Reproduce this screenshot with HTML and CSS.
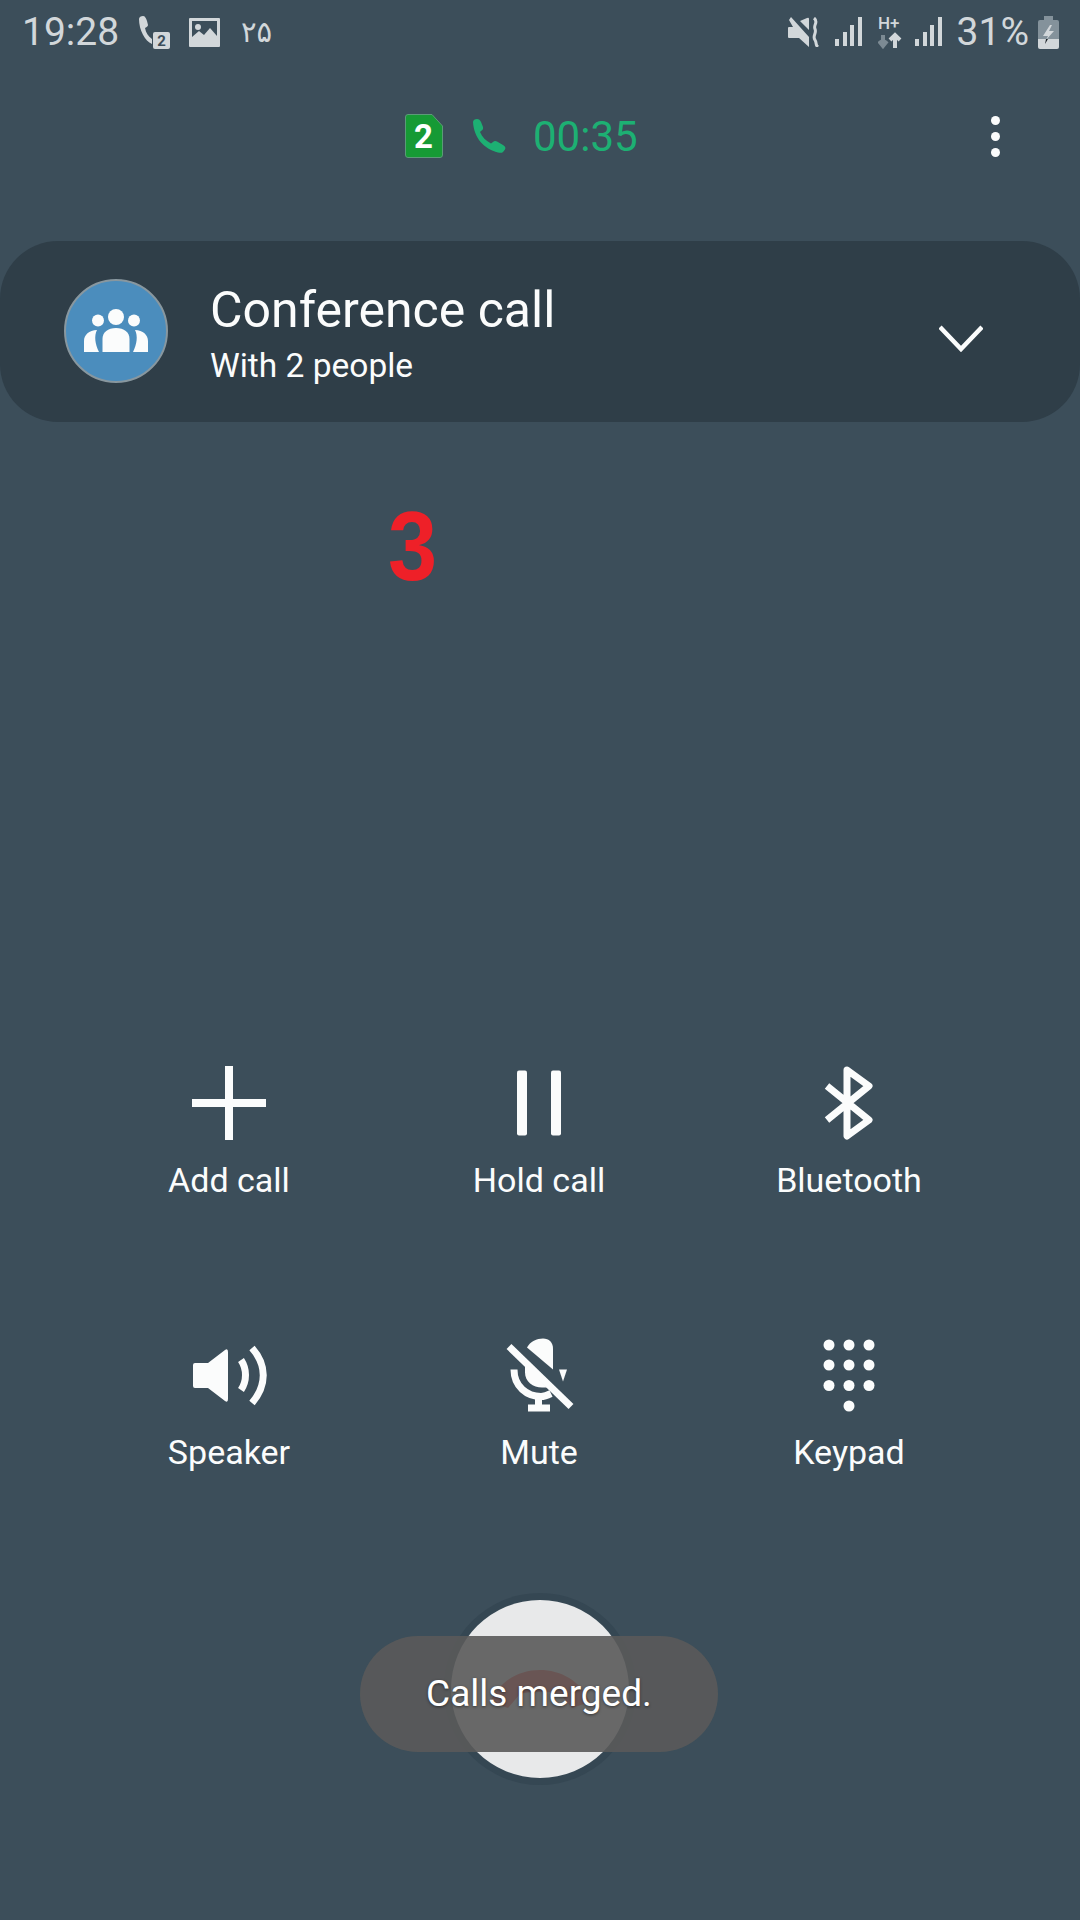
FILE: index.html
```html
<!DOCTYPE html>
<html lang="en">
<head>
    <meta charset="UTF-8">
    <meta name="viewport" content="width=device-width, initial-scale=1.0">
    <title>Conference call</title>
    <link rel="stylesheet" href="styles.css">
</head>
<body>
    <div class="screen">
        <div class="status-bar">
            <div class="status-left">
                <span class="status-time">19:28</span>
                <svg class="status-call" width="32" height="33" viewBox="0 0 32 33">
                    <path class="status-fill" d="M1 3C1 1 3 0 5 0C7 0 8 2 9 5L10 9C10 10 9 11 7 12C8 17 10 20 14 23V28C7 25 1 14 1 3Z"/>
                    <rect class="status-fill" x="15" y="16" width="17" height="17" rx="2"/>
                    <text class="chip-num" x="23.500" y="30">2</text>
                </svg>
                <svg class="status-gallery" width="31" height="29" viewBox="0 0 31 29">
                    <path class="status-fill" fill-rule="evenodd" d="M1 0H30Q31 0 31 1V28Q31 29 30 29H1Q0 29 0 28V1Q0 0 1 0ZM3 3V19L10 13L15 17L21 10L28 18V3Z"/>
                    <circle class="status-fill" cx="9" cy="9" r="3"/>
                </svg>
                <span class="status-date">۲۵</span>
            </div>
            <div class="status-right">
                <svg width="31" height="30" viewBox="0 0 31 30">
                    <path class="status-fill" d="M3 0L21 20V30L11 21H1Q0 21 0 20V11Q0 10 1 10H5L1 3ZM21 2V13L12 4L19 1Q21 0 21 2Z"/>
                    <path class="status-wave" d="M26 1C31 5 25 8 27 12C29 16 24 19 27 23C29 26 27 28 30 30"/>
                </svg>
                <svg class="signal" width="27" height="30" viewBox="0 0 27 30">
                    <rect x="0" y="22" width="4" height="7"/>
                    <rect x="8" y="15" width="4" height="14"/>
                    <rect x="15" y="8" width="4" height="21"/>
                    <rect x="23" y="0" width="4" height="29"/>
                </svg>
                <svg class="status-net" width="25" height="39" viewBox="0 -6 25 39">
                    <text class="net-text" x="0" y="13">H+</text>
                    <path class="net-down" d="M5 19V29M1 25L5 30L9 25"/>
                    <path class="net-up" d="M17 32V20M12 24L17 19L22 24"/>
                </svg>
                <svg class="signal" width="27" height="30" viewBox="0 0 27 30">
                    <rect x="0" y="22" width="4" height="7"/>
                    <rect x="8" y="15" width="4" height="14"/>
                    <rect x="15" y="8" width="4" height="21"/>
                    <rect x="23" y="0" width="4" height="29"/>
                </svg>
                <span class="status-pct">31%</span>
                <svg class="status-batt" width="21" height="33" viewBox="0 0 21 33">
                    <path fill="#84929b" d="M6 0H15V4H19Q21 4 21 6V23H0V6Q0 4 2 4H6Z"/>
                    <path class="status-fill" d="M0 23H21V31Q21 33 19 33H2Q0 33 0 31Z"/>
                    <path class="status-fill" d="M12 9L5 20H10L8 24L16 15H11L14 9Z"/>
                    <path fill="#1c2328" d="M10 23H8L7 28Z"/>
                </svg>
            </div>
        </div>

        <div class="call-head">
            <div class="sim-badge">
                <svg width="38" height="44" viewBox="0 0 38 44">
                    <path fill="#169a35" stroke="#5c9a78" d="M3 .5H27L37.500 12V41Q37.500 43.500 35 43.500H3Q.5 43.500 .5 41V3Q.5 .5 3 .5Z"/>
                    <text class="sim-num" x="18.500" y="34">2</text>
                </svg>
            </div>
            <svg class="call-glyph" width="34" height="34" viewBox="0 0 34 34">
                <path d="M1 3C1 1 3 0 5 0C7 0 8 1 9 3L11 8C11.500 10 10.500 11 9 12L8 13C10 18 14 22 19 24.500L21 23C22 22 23.500 21.500 25 22.500L31 26C33 27 34 29 33 30.500L31 33C30 34 28 34 26 33.500C12 30 2 19 1 3Z"/>
            </svg>
            <span class="call-timer">00:35</span>
            <div class="more-menu">
                <span></span><span></span><span></span>
            </div>
        </div>

        <div class="call-card">
            <div class="avatar">
                <svg width="100" height="100" viewBox="2 2 100 100">
                    <circle cx="52" cy="38" r="8"/>
                    <circle cx="34" cy="41.500" r="6"/>
                    <circle cx="70" cy="41.500" r="6"/>
                    <path d="M38.500 73V60C38.500 53 44 49 52 49C60 49 65.500 53 65.500 60V73Z"/>
                    <path d="M20 73V62C20 56 25 51 33 51C30 57 31 65 35 73Z"/>
                    <path d="M84 73V62C84 56 79 51 71 51C74 57 73 65 69 73Z"/>
                </svg>
            </div>
            <div class="card-text">
                <div class="card-title">Conference call</div>
                <div class="card-sub">With 2 people</div>
            </div>
            <svg class="card-chevron" width="44" height="28" viewBox="0 0 44 28">
                <path d="M1 3L22 25L43 3"/>
            </svg>
        </div>

        <div class="number-area">
            <span class="big-number">3</span>
        </div>

        <div class="actions">
            <div class="action">
                <svg class="action-icon" width="90" height="90" viewBox="0 0 90 90">
                    <path class="icon-line" d="M8 45H82M45 8V82"/>
                </svg>
                <div class="action-label">Add call</div>
            </div>
            <div class="action">
                <svg class="action-icon" width="90" height="90" viewBox="0 0 90 90">
                    <rect class="icon-fill" x="23" y="12.500" width="10" height="65" rx="2"/>
                    <rect class="icon-fill" x="57" y="12.500" width="10" height="65" rx="2"/>
                </svg>
                <div class="action-label">Hold call</div>
            </div>
            <div class="action">
                <svg class="action-icon" width="90" height="90" viewBox="0 0 90 90">
                    <path class="icon-line icon-round" d="M23 28L65 62L43 78V12L65 28L23 62"/>
                </svg>
                <div class="action-label">Bluetooth</div>
            </div>
            <div class="action">
                <svg class="action-icon" width="90" height="90" viewBox="0 0 90 90">
                    <g transform="translate(9 17)">
                        <path class="icon-fill" d="M2 16H15L32 3Q35 1 35 5V52Q35 56 32 54L15 41H2Q0 41 0 39V18Q0 16 2 16Z"/>
                        <path class="icon-arc" d="M48 13C54 22 54 34 48 43"/>
                        <path class="icon-arc" d="M59 1C74 18 74 38 59 56"/>
                    </g>
                </svg>
                <div class="action-label">Speaker</div>
            </div>
            <div class="action">
                <svg class="action-icon" width="90" height="90" viewBox="0 0 90 90">
                    <g transform="translate(11 8.500)">
                        <path class="icon-fill" d="M22 9C25 3 32 0 38 0C44 0 48 4 48 10V31Z"/>
                        <path class="icon-fill" d="M20 26V34C20 43 28 49 37 49H42Z"/>
                        <path class="icon-arc" d="M9 31C9 48 22 58 36 58C39 58 42 57 46 55"/>
                        <path class="icon-fill" d="M54 31H62L58 43Z"/>
                        <rect class="icon-fill" x="30" y="58" width="7" height="9"/>
                        <rect class="icon-fill" x="23" y="66" width="22" height="7"/>
                        <path class="icon-slash" d="M4 8L66 68"/>
                    </g>
                </svg>
                <div class="action-label">Mute</div>
            </div>
            <div class="action">
                <svg class="action-icon" width="90" height="90" viewBox="0 0 90 90">
                    <g class="icon-fill">
                        <circle cx="25" cy="15" r="5.500"/><circle cx="45" cy="15" r="5.500"/><circle cx="65" cy="15" r="5.500"/>
                        <circle cx="25" cy="35" r="5.500"/><circle cx="45" cy="35" r="5.500"/><circle cx="65" cy="35" r="5.500"/>
                        <circle cx="25" cy="55.500" r="5.500"/><circle cx="45" cy="55.500" r="5.500"/><circle cx="65" cy="55.500" r="5.500"/>
                        <circle cx="45" cy="76" r="5.500"/>
                    </g>
                </svg>
                <div class="action-label">Keypad</div>
            </div>
        </div>

        <div class="end-wrap">
            <div class="end-ring">
                <div class="end-button">
                    <svg width="100" height="38" viewBox="0 0 100 38">
                        <path class="end-handset" d="M0 32C10 10 30 0 50 0C70 0 90 10 100 32L82 38L70 24C60 21 40 21 30 24L18 38Z"/>
                    </svg>
                </div>
            </div>
        </div>

        <div class="toast">Calls merged.</div>
    </div>
</body>
</html>
```

FILE: styles.css
```css
:root {
    --bg: #3c4e5a;
    --card: #2f3e48;
    --status: #d2d7da;
    --white: #fbfcfc;
    --green: #1db073;
}

* {
    margin: 0;
    padding: 0;
    box-sizing: border-box;
}

body {
    font-family: 'Roboto', sans-serif;
    background: var(--bg);
    color: var(--white);
    overflow: hidden;
}

.screen {
    position: relative;
    width: 1080px;
    height: 1920px;
    overflow: hidden;
}

svg {
    display: block;
}

/* status bar */
.status-bar {
    height: 64px;
    display: flex;
    justify-content: space-between;
    align-items: center;
    padding: 0 21px 0 22px;
    color: var(--status);
}

.status-left,
.status-right {
    display: flex;
    align-items: center;
}

.status-time {
    font-size: 39px;
    width: 116px;
}

.status-gallery {
    margin-left: 19px;
}

.status-date {
    font-family: 'DejaVu Sans', sans-serif;
    font-size: 29px;
    margin-left: 21px;
}

.status-fill {
    fill: var(--status);
}

.status-wave {
    fill: none;
    stroke: var(--status);
    stroke-width: 3;
}

.chip-num {
    font-size: 15px;
    font-weight: 700;
    fill: #3c4e5a;
    text-anchor: middle;
}

.signal {
    fill: var(--status);
    margin-left: 16px;
}

.status-net {
    margin: -6px 0 0 16px;
}

.net-text {
    font-size: 17px;
    font-weight: 500;
    fill: var(--status);
}

.net-down,
.net-up {
    fill: none;
    stroke-width: 4;
}

.net-down {
    stroke: #7c8a93;
}

.net-up {
    stroke: var(--status);
}

.status-right .signal + .status-net + .signal {
    margin-left: 12px;
}

.status-pct {
    font-size: 39px;
    margin-left: 15px;
}

.status-batt {
    margin-left: 9px;
}

/* call header */
.call-head {
    height: 144px;
    margin-bottom: 33px;
    display: flex;
    align-items: center;
    padding: 0 80px 0 405px;
}

.sim-num {
    font-size: 33px;
    font-weight: 700;
    fill: #fff;
    text-anchor: middle;
}

.call-glyph {
    margin-left: 29px;
    fill: var(--green);
}

.call-timer {
    color: var(--green);
    font-size: 42px;
    margin-left: 27px;
}

.more-menu {
    margin-left: auto;
    display: flex;
    flex-direction: column;
    gap: 7px;
}

.more-menu span {
    width: 9px;
    height: 9px;
    border-radius: 50%;
    background: var(--white);
}

/* conference card */
.call-card {
    height: 181px;
    background: var(--card);
    border-radius: 58px;
    display: flex;
    align-items: center;
    padding: 0 97px 0 64px;
}

.avatar {
    width: 104px;
    height: 104px;
    margin-top: -1px;
    border-radius: 50%;
    background: #4b8dbd;
    border: 2px solid #88979f;
}

.avatar svg {
    fill: var(--white);
}

.card-text {
    margin-left: 42px;
    padding-top: 4px;
    flex: 1;
}

.card-title {
    font-size: 50px;
    line-height: 58px;
}

.card-sub {
    font-size: 33.500px;
    line-height: 40px;
    margin-top: 7px;
}

.card-chevron {
    margin-top: 12px;
}

.card-chevron path {
    fill: none;
    stroke: var(--white);
    stroke-width: 4.5;
}

/* number under the card */
.number-area {
    height: 636px;
    padding: 67px 0 0 388px;
}

.big-number {
    display: inline-block;
    font-family: 'Liberation Sans', sans-serif;
    color: #ee2028;
    font-size: 98px;
    font-weight: 700;
    line-height: 115px;
    transform: scaleX(0.9);
    transform-origin: left center;
}

/* action buttons */
.actions {
    display: grid;
    grid-template-columns: repeat(3, 310px);
    grid-template-rows: 272px 263px;
    padding-left: 74px;
}

.action {
    display: flex;
    flex-direction: column;
    align-items: center;
}

.action-label {
    font-size: 34px;
    line-height: 40px;
    margin-top: 12px;
}

.icon-line {
    fill: none;
    stroke: var(--white);
    stroke-width: 8;
}

.icon-round {
    stroke-width: 7;
    stroke-linejoin: round;
}

.icon-fill {
    fill: var(--white);
}

.icon-arc {
    fill: none;
    stroke: var(--white);
    stroke-width: 7;
}

.icon-slash {
    fill: none;
    stroke: var(--white);
    stroke-width: 7;
}

/* end call */
.end-wrap {
    display: flex;
    justify-content: center;
}

.end-ring {
    width: 192px;
    height: 192px;
    border-radius: 50%;
    background: #354753;
    display: flex;
    align-items: center;
    justify-content: center;
}

.end-button {
    width: 178px;
    height: 178px;
    border-radius: 50%;
    background: #e8e9ea;
    display: flex;
    align-items: center;
    justify-content: center;
}

.end-handset {
    fill: #f03020;
}

/* toast over the end button */
.toast {
    position: absolute;
    left: 360px;
    top: 1636px;
    width: 358px;
    height: 116px;
    padding-bottom: 2px;
    border-radius: 58px;
    background: rgba(90, 90, 90, 0.9);
    color: #fff;
    font-size: 37px;
    text-shadow: 0 1px 3px rgba(0, 0, 0, 0.5);
    display: flex;
    align-items: center;
    justify-content: center;
}
```
